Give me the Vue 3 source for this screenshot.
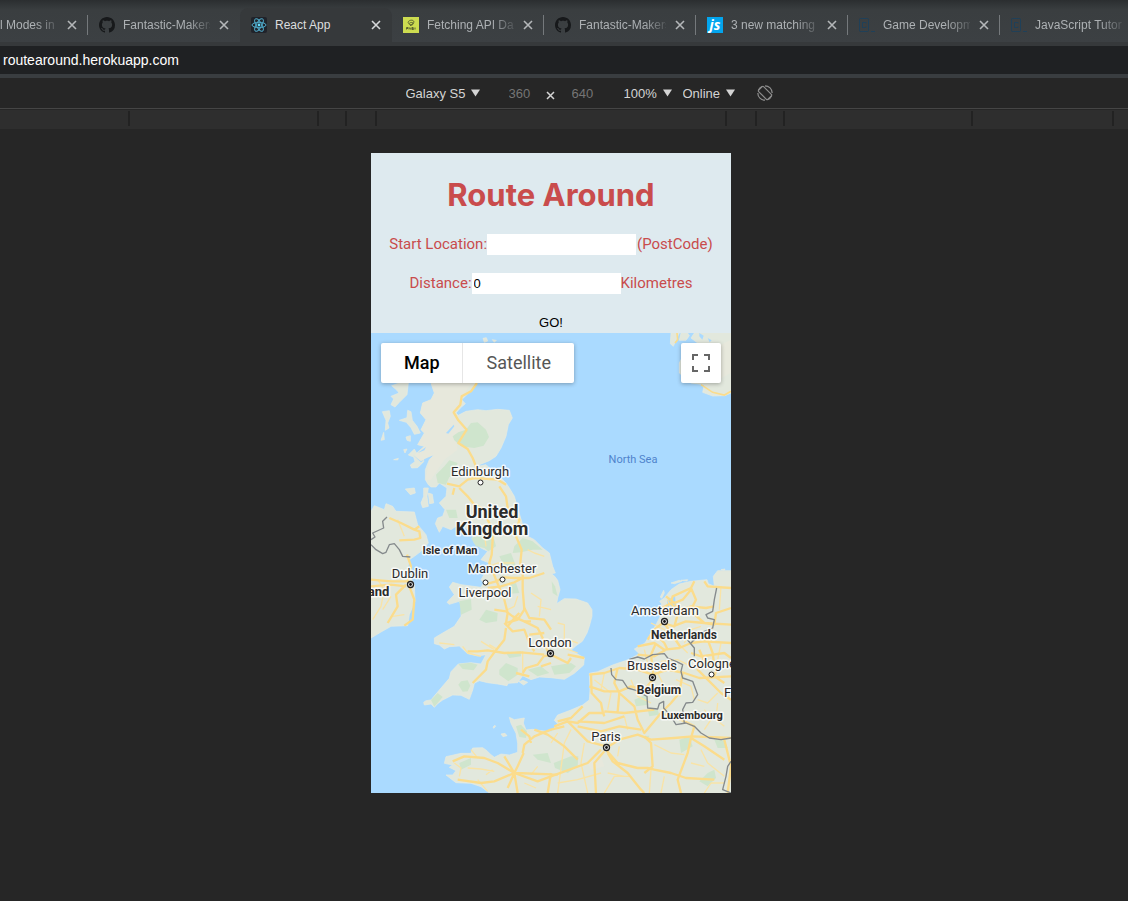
<script setup>
import { ref } from 'vue'

const tabs = [
  { title: 'l Modes in S', icon: '', first: true },
  { title: 'Fantastic-Makers', icon: 'github' },
  { title: 'React App', icon: 'react', active: true },
  { title: 'Fetching API Data', icon: 'note' },
  { title: 'Fantastic-Makers', icon: 'github' },
  { title: '3 new matching j', icon: 'js' },
  { title: 'Game Developme', icon: 'code' },
  { title: 'JavaScript Tutoria', icon: 'code', last: true }
]

const postcode = ref('')
const distance = ref('0')

const ticks = [128, 317, 345, 375, 725, 755, 783, 971, 1112]

const cities = [
  { name: 'Edinburgh', x: 109, y: 143, mx: 109, my: 149 },
  { name: 'Dublin', x: 39, y: 245, mx: 39, my: 251, capital: true },
  { name: 'Manchester', x: 131, y: 240, mx: 131, my: 246 },
  { name: 'Liverpool', x: 114, y: 264, mx: 114, my: 249 },
  { name: 'London', x: 179, y: 314, mx: 179, my: 320, capital: true },
  { name: 'Amsterdam', x: 294, y: 282, mx: 293, my: 288, capital: true },
  { name: 'Brussels', x: 281, y: 337, mx: 281, my: 344, capital: true },
  { name: 'Cologne', x: 341, y: 335, mx: 340, my: 341 },
  { name: 'Paris', x: 235, y: 408, mx: 235, my: 414, capital: true }
]

const regions = [
  { name: 'United', x: 121, y: 185, size: 'xl' },
  { name: 'Kingdom', x: 121, y: 202, size: 'xl' },
  { name: 'Isle of Man', x: 79, y: 221, size: 'sm' },
  { name: 'Ireland', x: -2, y: 263, size: 'lg' },
  { name: 'Netherlands', x: 313, y: 306, size: 'md' },
  { name: 'Belgium', x: 288, y: 361, size: 'md' },
  { name: 'Luxembourg', x: 321, y: 386, size: 'sm' }
]

const land = [
  // Great Britain
  'M180 150L200 60L300 70L318 150L295 178L272 200L283 212L268 225L255 240L262 247L285 235L320 230L345 233L380 229L415 232L424 255L412 275L405 310L390 345L375 370L355 383L325 395L312 402L345 395L358 408L330 430L385 430L405 450L415 465L430 490L440 525L455 575L470 610L490 620L515 645L535 660L545 700L553 720L541 722L551 730L560 742L567 770L560 795L557 812L580 797L615 798L650 810L663 830L663 850L655 880L648 900L634 925L615 938L600 952L640 975L638 996L610 1021L580 1039L540 1034L505 1032L480 1040L455 1028L440 1049L412 1051L408 1058L380 1053L350 1049L325 1043L310 1051L305 1071L295 1099L270 1087L245 1086L215 1101L200 1112L190 1123L180 1113L160 1116L158 1108L165 1103L180 1101L205 1071L235 1036L240 1016L262 993L300 989L330 993L345 965L320 969L290 962L265 939L235 941L220 948L205 936L190 932L190 915L215 900L250 880L270 850L272 820L265 805L235 814L228 808L250 785L235 762L245 748L270 755L330 763L338 750L330 740L345 715L355 690L330 680L350 655L330 645L310 630L302 600L285 585L255 580L240 590L215 580L205 598L193 572L200 555L215 550L222 530L205 510L225 490L228 465L205 450L195 462L180 462L172 455L163 440L163 410L175 380L190 365L170 370L145 385L132 365L160 340L140 335L160 300L150 290L165 260L148 240L155 210L180 200L190 180Z',
  // Ireland
  'M0 535L10 518L40 530L45 512L65 520L75 535L130 537L140 575L165 605L172 630L150 655L130 670L115 680L108 715L130 755L132 805L115 845L110 878L60 880L30 897L0 915Z',
  // Continent
  'M1080 713L1040 713L1027 730L1030 760L1012 752L1008 740L960 745L925 753L900 770L880 795L866 805L872 812L868 850L855 875L840 900L822 930L790 948L805 962L775 979L725 996L680 1016L655 1021L657 1071L655 1101L635 1116L600 1131L560 1146L550 1162L560 1172L540 1196L510 1193L485 1189L465 1191L457 1170L460 1155L430 1160L415 1153L420 1171L435 1201L440 1231L440 1258L415 1266L390 1263L370 1273L360 1265L345 1251L335 1244L305 1245L300 1261L270 1261L225 1271L220 1291L245 1296L235 1303L255 1313L245 1326L225 1326L255 1349L300 1351L330 1361L355 1380L1080 1380Z',
  // Norway
  'M970 0L960 15L980 30L940 60L925 90L925 120L960 150L1000 155L995 178L1025 189L1062 188L1080 180L1080 0Z',
  'M900 0L898 32L907 40L918 15L925 0ZM930 0L925 22L945 22L955 8L950 0Z',
  // Hebrides, Skye, Mull, Islay, Arran, Isle of Man, Orkney
  'M62 158L85 150L112 150L108 185L85 208L72 222L60 215L68 198L60 190L84 180L78 172Z',
  'M34 236L55 233L58 250L50 270L54 285L43 292L45 262ZM38 298L40 320L30 322Z',
  'M85 262L108 254L110 232L120 236L124 262L138 280L148 300L130 304L120 284L106 268Z',
  'M112 366L130 348L142 370L158 375L158 386L140 404L122 405L118 396L132 386L128 372ZM68 380L82 376L80 381Z',
  'M105 312L118 308L118 325L108 322ZM98 350L108 348L102 360Z',
  'M103 468L130 465L133 480L118 485ZM158 465L172 465L168 490L172 520L155 524L150 510L158 490ZM172 480L184 484L188 510L176 512Z',
  'M336 16L346 14L350 24L340 28ZM364 20L376 22L370 28Z',
  // Channel Islands, Wight, Frisian Islands
  'M366 1182L372 1177L374 1180L368 1186ZM390 1203L402 1201L408 1208L396 1211ZM444 1046L456 1042L470 1048L458 1056Z',
  'M868 792L878 772L880 780L872 796ZM900 750L925 742L932 745L910 752ZM930 742L950 740L948 744ZM1050 710L1062 708L1060 712Z'
]

const greens = [
  'M245 310L262 298L285 290L300 270L320 268L345 290L354 312L338 338L310 345L270 340L250 322Z',
  'M220 400L235 382L260 390L250 410L262 425L235 432L225 455L200 450L195 425Z',
  'M300 615L340 605L370 620L375 640L352 655L340 645L315 640Z',
  'M225 530L255 530L260 555L235 555Z',
  'M430 640L455 615L485 625L515 650L485 650L450 658L425 660Z',
  'M385 670L420 660L435 700L408 705L395 690Z',
  'M415 755L435 750L445 780L420 782Z',
  'M265 805L300 798L302 830L270 845Z',
  'M325 860L345 830L380 840L378 865L345 870Z',
  'M262 993L300 989L320 995L308 1012L275 1008Z',
  'M262 1055L270 1045L290 1042L298 1058L290 1075L275 1076Z',
  'M180 1101L200 1080L215 1092L190 1121Z',
  'M385 1010L405 990L440 1005L440 1025L412 1045L385 1025Z',
  'M405 960L450 955L450 970L415 975Z',
  'M470 1010L510 1000L535 1020L500 1030Z',
  'M540 1000L600 990L615 1000L595 1020L550 1025Z',
  'M542 745L552 760L560 790L545 780Z',
  'M435 1180L450 1175L468 1195L465 1215L445 1212Z',
  'M265 1290L300 1275L300 1295L270 1310Z',
  'M485 1265L530 1260L540 1290L500 1280Z',
  'M548 1290L600 1270L622 1270L620 1300L590 1320L552 1305Z',
  'M790 1100L825 1085L832 1115L795 1120Z',
  'M830 1130L860 1130L865 1145L835 1150Z',
  'M925 1220L955 1210L965 1240L930 1260Z',
  'M1030 1220L1060 1222L1070 1245L1040 1245Z',
  'M985 1345L1010 1320L1030 1310L1035 1335L1010 1360Z',
  'M810 1210L835 1208L828 1222Z'
]

const highlands = [
  'M180 150L300 150L270 200L250 240L280 290L255 320L260 350L220 380L180 440L163 440L175 380L190 365L145 385L132 365L160 340L140 335L160 300L150 290L165 260L148 240L155 210L180 200L190 180Z',
  'M1000 60L1080 20L1080 120L1040 140L1010 120Z',
  'M650 1290L690 1270L700 1300L660 1310Z'
]

const majorRoads = [
  'M318 150L300 175L272 190L268 215L248 238L262 262L287 290L262 330L290 348L305 375L315 400L310 432',
  'M228 452L265 460L290 440L312 435L380 440L405 455',
  'M250 465L245 485M265 465L290 490L310 515L340 530L350 560L362 585L365 620L362 665L355 690L375 740L388 770L400 800L410 840L405 870L440 860L460 830L455 770L455 720L448 690L452 650L435 610L440 580L445 560L410 525L405 490L385 460',
  'M340 755L375 745L400 733L430 735L475 735L520 720M350 765L390 760L430 748L455 735',
  'M370 830L405 835L425 850L460 865L480 865M410 880L435 850L445 840M400 870L425 895L460 890L475 930L490 955M405 885L400 920L370 958L350 985L345 1010L320 1035L305 1050M290 955L320 955L350 952L400 960L450 958L520 965',
  'M460 865L500 885L520 925L530 955M475 905L520 900M460 825L475 855L520 860L540 890',
  'M455 1020L465 1005L500 995L518 970L540 965L590 990L600 975M510 1000L540 990M435 1020L475 1030M590 965L640 975',
  'M0 740L60 745L110 745L120 700L108 665M115 760L130 800L125 860L100 878M0 760L60 755L105 760M105 755L75 785L80 820L50 870',
  'M55 555L90 570L130 590L145 595L148 615L130 620L85 622M130 590L145 580',
  'M865 830L900 810L905 790L960 765L970 745M885 790L910 810L935 800L960 770M900 810L920 845L910 880L875 870L850 890L830 920M910 815L935 830L960 820L1005 825L1030 820M920 845L960 835L1000 870L1080 875M960 765L975 800L965 820M1000 745L1010 760L1080 765M905 880L945 865L1000 870L1030 875L1035 840L1080 825',
  'M800 940L850 930L880 950L925 945L960 930L1000 925L1080 930M850 900L880 930L890 950M880 870L900 900L930 945M800 965L850 970L885 950M855 930L840 965L845 1010L850 1040',
  'M655 1025L700 1020L745 1005L800 1010L845 1025L890 1010L940 1020L985 1035L1080 1030M985 950L1000 985L980 1010L1010 1040L1050 1080L1080 1100M960 960L990 970L1060 960L1080 975M1000 985L1040 1000L1030 1030L1060 1050M1010 920L1025 960L1030 1000',
  'M660 1025L662 1080L690 1110L695 1135L700 1150M740 1005L730 1050L745 1080L740 1135M655 1060L700 1075L745 1075L780 1060L820 1070L850 1035M700 1135L760 1140L850 1130M745 1080L790 1120L800 1160L820 1200L870 1140L900 1110L925 1080L935 1020',
  'M550 1180L590 1165L620 1170L655 1140L700 1140M560 1165L600 1155L635 1120M590 1165L610 1185L650 1225L705 1240M620 1165L700 1170L760 1150M620 1180L690 1195L745 1180L810 1190',
  'M705 1245L745 1220L800 1205L840 1220L910 1215L965 1210L1080 1215M705 1250L740 1290L800 1305L830 1305L850 1310L900 1320L945 1335L1030 1340M700 1255L670 1290L675 1380M710 1260L725 1285L770 1320L810 1370L820 1380M690 1250L650 1290L540 1330L500 1345L430 1320',
  'M820 1210L840 1230L845 1300L820 1320M960 1215L950 1260L920 1340L930 1380M1060 1220L1080 1300L1070 1380M870 1140L930 1160L970 1180L960 1215L1000 1240L1060 1280',
  'M455 1260L460 1235L490 1210L540 1190L580 1180M450 1190L475 1210L480 1230M490 1190L530 1205L580 1240L620 1280M458 1260L440 1300L430 1320L370 1345L330 1350L260 1340M430 1320L380 1290L340 1275L280 1270L245 1285M435 1320L560 1325M430 1320L400 1270M430 1320L410 1365M430 1320L440 1380M540 1320L530 1380'
]

const minorRoads = [
  'M20 740L40 770L30 820L5 860M60 790L35 830M65 850L100 845M80 560L100 610',
  'M205 930L250 935M275 940L290 960L330 970M380 950L355 935M330 925L370 950',
  'M455 955L455 1015M410 830L430 820L440 790M480 780L510 800L505 850M470 650L490 660L520 670M500 820L540 830M560 870L580 875L580 920M590 920L620 930M540 930L620 960M345 640L340 600L370 590M355 700L380 690L430 690',
  'M250 1290L270 1305L265 1330M290 1305L330 1308L370 1315M345 1325L365 1310M320 1340L350 1375M480 1325L500 1300M460 1350L495 1365M300 1250L320 1275M540 1230L560 1200M600 1190L580 1230L560 1380M640 1230L630 1290L650 1380',
  'M840 870L880 890L920 930L950 960M940 930L960 890L990 880M900 830L890 800M1045 830L1050 760M830 990L820 950M870 985L920 980L960 1000M860 1020L880 1060L930 1090M915 1040L960 1060L970 1100M980 1100L1010 1110L1040 1080M1000 1130L1020 1160L1000 1190M1040 1110L1035 1160L1060 1180M1050 930L1040 980',
  'M670 1040L720 1080L710 1130M700 1020L690 1070M780 1040L800 1090L840 1110M760 1150L770 1190M740 1270L745 1240M710 1320L760 1330M850 1235L900 1260L940 1265M880 1330L870 1380M780 1330L730 1330L700 1380M990 1250L1010 1290L1060 1330M960 1290L1000 1300M560 1350L620 1340L690 1320M840 1310L835 1380M1000 1380L1020 1350L1060 1350'
]

const borders = [
  'M48 552L35 565L38 585L5 600L12 612L0 620M0 635L15 650L35 662L45 658L55 635L70 632L85 650L95 670L118 672',
  'M720 1005L722 1025L735 1040L755 1042L770 1065L795 1072L828 1090L830 1125L860 1128L865 1112L878 1105L878 1125L900 1150L915 1175L945 1170L970 1180L990 1200L1015 1215L1050 1220L1080 1215',
  'M775 979L800 972L820 978L845 965L880 962L890 975L915 985L935 995L930 1015L935 1035L965 1045L980 1085L965 1108L945 1110L935 1130L940 1170',
  'M1037 765L1030 800L1025 835L1005 845L1010 855L1030 860L1025 885L1000 895L975 915L960 930',
  'M950 921L970 945L970 970M1080 1285L1070 1300L1065 1330L1055 1370L1080 1380'
]
</script>

<template>
  <div class="browser">
    <nav class="tab-strip" aria-label="Open tabs">
      <div
        v-for="(tab, i) in tabs"
        :key="i"
        class="tab"
        :class="{ active: tab.active, first: tab.first, last: tab.last, beforeActive: i === 1 }"
      >
        <svg v-if="tab.icon === 'github'" class="favicon" viewBox="0 0 16 16" aria-hidden="true">
          <path fill="#17191b" d="M8 0C3.58 0 0 3.58 0 8c0 3.54 2.29 6.53 5.47 7.59.4.07.55-.17.55-.38 0-.19-.01-.82-.01-1.49-2.01.37-2.53-.49-2.69-.94-.09-.23-.48-.94-.82-1.13-.28-.15-.68-.52-.01-.53.63-.01 1.08.58 1.23.82.72 1.21 1.87.87 2.33.66.07-.52.28-.87.51-1.07-1.78-.2-3.64-.89-3.64-3.95 0-.87.31-1.59.82-2.15-.08-.2-.36-1.02.08-2.12 0 0 .67-.21 2.2.82.64-.18 1.32-.27 2-.27s1.36.09 2 .27c1.53-1.04 2.2-.82 2.2-.82.44 1.1.16 1.92.08 2.12.51.56.82 1.27.82 2.15 0 3.07-1.87 3.75-3.65 3.95.29.25.54.73.54 1.48 0 1.07-.01 1.93-.01 2.2 0 .21.15.46.55.38A8.01 8.01 0 0 0 16 8c0-4.42-3.58-8-8-8z" />
        </svg>
        <svg v-else-if="tab.icon === 'react'" class="favicon" viewBox="0 0 16 16" aria-hidden="true">
          <rect width="16" height="16" rx="2" fill="#20232a" />
          <g fill="none" stroke="#4fa9c8" stroke-width="1">
            <ellipse cx="8" cy="8" rx="7" ry="2.7" />
            <ellipse cx="8" cy="8" rx="7" ry="2.7" transform="rotate(60 8 8)" />
            <ellipse cx="8" cy="8" rx="7" ry="2.7" transform="rotate(120 8 8)" />
          </g>
          <circle cx="8" cy="8" r="1.4" fill="#61dafb" />
        </svg>
        <svg v-else-if="tab.icon === 'note'" class="favicon" viewBox="0 0 16 16" aria-hidden="true">
          <rect width="16" height="16" fill="#cddc50" />
          <g fill="none" stroke="#5c6530" stroke-width="1">
            <path d="M5.5 6.5C4 4 8 2.500 10 3.500C12.500 5 9 8.500 6.500 7.500C5 6.500 8 4.500 10 6C11 7 9 8.500 7 8.500" />
            <path d="M3.500 12.500V10.500H5M3.500 11.500H5M6 12.500V10.500L8 12.500V10.500M10.500 10.500H9V11.500H10.500V12.500H9M12 10.500V12.500" />
          </g>
        </svg>
        <span v-else-if="tab.icon === 'js'" class="favicon js-icon" aria-hidden="true">js</span>
        <svg v-else-if="tab.icon === 'code'" class="favicon" viewBox="0 0 16 16" aria-hidden="true">
          <g fill="none" stroke="#1f4059" stroke-width="1">
            <rect x="0.500" y="1.500" width="9" height="13" rx="1" />
            <path d="M7 6.500V5.500H3.500V10.500H7V9.500M12 14.500H16" />
          </g>
        </svg>
        <a class="tab-title" href="#">{{ tab.title }}</a>
        <button v-if="!tab.last" class="tab-close" type="button" aria-label="Close tab">
          <svg viewBox="0 0 10 10" width="10" height="10"><path d="M1 1L9 9M9 1L1 9" stroke="currentColor" stroke-width="1.600" fill="none" /></svg>
        </button>
      </div>
    </nav>

    <div class="address-bar">
      <input class="address" type="text" value="routearound.herokuapp.com" aria-label="Address" />
    </div>

    <div class="device-bar">
      <label class="picker device">
        <select aria-label="Device"><option>Galaxy S5</option></select>
        <svg viewBox="0 0 9 8" width="9" height="8"><path d="M0 0.500H9L4.500 7.500Z" fill="currentColor" /></svg>
      </label>
      <input class="dimension" type="text" value="360" aria-label="Width" />
      <span class="times"><svg viewBox="0 0 9 9" width="9" height="9"><path d="M1 1L8 8M8 1L1 8" stroke="currentColor" stroke-width="1.500" /></svg></span>
      <input class="dimension" type="text" value="640" aria-label="Height" />
      <label class="picker zoom">
        <select aria-label="Zoom"><option>100%</option></select>
        <svg viewBox="0 0 9 8" width="9" height="8"><path d="M0 0.500H9L4.500 7.500Z" fill="currentColor" /></svg>
      </label>
      <label class="picker network">
        <select aria-label="Network"><option>Online</option></select>
        <svg viewBox="0 0 9 8" width="9" height="8"><path d="M0 0.500H9L4.500 7.500Z" fill="currentColor" /></svg>
      </label>
      <button class="rotate" type="button" aria-label="Rotate">
        <svg viewBox="0 0 16 16" width="16" height="16" fill="none" stroke="#8d8d8d" stroke-width="1.200">
          <rect x="4.500" y="1.500" width="7" height="13" rx="1" transform="rotate(-45 8 8)" />
          <path d="M8 0.800A7.200 7.200 0 0 1 15.200 8M8 15.200A7.200 7.200 0 0 1 0.800 8M1.500 5A7 7 0 0 1 5 1.500M14.500 11A7 7 0 0 1 11 14.500" />
        </svg>
      </button>
    </div>

    <div class="ruler">
      <svg width="100%" height="19" aria-hidden="true">
        <rect v-for="t in ticks" :key="t" :x="t" y="1" width="2" height="15" fill="#222" />
      </svg>
    </div>

    <main class="stage">
      <div class="device-screen">
        <form class="planner" @submit.prevent>
          <h1>Route Around</h1>
          <div class="field">
            <label for="start">Start Location:</label>
            <input id="start" v-model="postcode" type="text" />
            <span class="unit spaced">(PostCode)</span>
          </div>
          <div class="field">
            <label for="distance">Distance:</label>
            <input id="distance" v-model="distance" type="text" />
            <span class="unit">Kilometres</span>
          </div>
          <button class="go" type="submit">GO!</button>
        </form>

        <section class="map" aria-label="Map">
          <svg class="terrain" viewBox="0 0 1080 1380" preserveAspectRatio="xMinYMin slice" aria-hidden="true">
            <rect width="1080" height="1380" fill="#aadaff" />
            <path v-for="(d, i) in land" :key="'l' + i" :d="d" fill="#e2e8dd" stroke="#e9ecdf" stroke-width="2" stroke-linejoin="round" />
            <path v-for="(d, i) in highlands" :key="'h' + i" :d="d" fill="#e7e8dc" />
            <path v-for="(d, i) in greens" :key="'g' + i" :d="d" fill="#cfe5cd" />
            <path d="M888 802L912 790L916 835L900 850L908 838L890 825ZM225 300L248 275L250 280L232 302ZM140 360L165 342L160 352ZM125 365L150 385L160 380L150 388ZM985 0L998 8L994 20L985 10ZM1010 15L1022 22L1016 28Z" fill="#aadaff" />
            <g fill="none" stroke="#f9e3a6" stroke-width="4" stroke-linejoin="round">
              <path v-for="(d, i) in minorRoads" :key="'m' + i" :d="d" />
            </g>
            <g fill="none" stroke="#fbdc8c" stroke-width="7" stroke-linejoin="round">
              <path v-for="(d, i) in majorRoads" :key="'r' + i" :d="d" />
            </g>
            <path d="M918 0L920 20L912 30M990 155L1025 178L1060 186L1080 175" fill="none" stroke="#fbdc8c" stroke-width="5" />
            <g fill="none" stroke="#858a8c" stroke-width="4" stroke-linejoin="round">
              <path v-for="(d, i) in borders" :key="'b' + i" :d="d" />
            </g>
          </svg>
          <svg class="labels" viewBox="0 0 360 460" preserveAspectRatio="xMinYMin slice">
            <g v-for="c in cities" :key="c.name" >
              <g transform="translate(0.5 0.5)">
                <circle :cx="c.mx" :cy="c.my" :r="c.capital ? 3 : 2.5" fill="#fff" stroke="#222" :stroke-width="c.capital ? 1.3 : 1" />
                <circle v-if="c.capital" :cx="c.mx" :cy="c.my" r="1.4" fill="#111" />
              </g>
              <text :x="c.x" :y="c.y" class="city">{{ c.name }}</text>
            </g>
            <text x="353" y="364" class="city start">Frankfurt</text>
            <text v-for="r in regions" :key="r.name" :x="r.x" :y="r.y" class="region" :class="r.size">{{ r.name }}</text>
            <text x="262" y="130" class="sea">North Sea</text>
          </svg>

          <div class="map-controls">
            <div class="map-type">
              <button type="button" class="selected">Map</button>
              <button type="button" class="other">Satellite</button>
            </div>
            <button type="button" class="fullscreen" aria-label="Toggle fullscreen view">
              <svg viewBox="0 0 18 18" width="18" height="18"><path d="M0 0H6V2H2V6H0ZM12 0H18V6H16V2H12ZM0 12H2V16H6V18H0ZM16 12H18V18H12V16H16Z" fill="#666" /></svg>
            </button>
          </div>
        </section>
      </div>
    </main>
  </div>
</template>

<style>
html,
body {
  background: #262626;
}
</style>

<style scoped>
.browser {
  min-height: 100vh;
  display: flex;
  flex-direction: column;
  background: #262626;
  font-family: "Liberation Sans", Arial, sans-serif;
  overflow: hidden;
}

button,
input,
select {
  margin: 0;
  padding: 0;
  border: 0;
  background: none;
  font: inherit;
  color: inherit;
  border-radius: 0;
}

svg {
  display: block;
}

.tab-strip {
  display: flex;
  height: 46px;
  box-sizing: border-box;
  padding-top: 8px;
  background: linear-gradient(#2b2e30 0, #3a3e40 10px, #3c4043 42px, #36393b 42px);
  overflow: hidden;
}

.tab {
  position: relative;
  display: flex;
  flex: 0 0 152px;
  align-items: center;
  box-sizing: border-box;
  height: 34px;
  padding-left: 11px;
  font-size: 12px;
  color: #adb1b4;
}

.tab::after {
  content: '';
  position: absolute;
  right: 0;
  top: 7px;
  width: 1px;
  height: 20px;
  background: #75797c;
}

.tab.active::after,
.tab.beforeActive::after,
.tab.last::after {
  display: none;
}

.tab.first {
  flex-basis: 88px;
  padding-left: 0;
}

.tab.active {
  height: 38px;
  padding-bottom: 4px;
  border-radius: 8px 8px 0 0;
  background: #36393b;
  color: #dcdedf;
}

.favicon {
  flex: none;
  width: 16px;
  height: 16px;
  margin-right: 8px;
}

.js-icon {
  background: #03a5ee;
  color: #fff;
  font: italic 700 14px/16px "Open Sans", sans-serif;
  text-align: center;
}

.tab-title {
  flex: none;
  width: 87px;
  line-height: 16px;
  color: inherit;
  text-decoration: none;
  white-space: nowrap;
  overflow: hidden;
  mask-image: linear-gradient(90deg, #000 64px, transparent 92px);
}

.tab.first .tab-title {
  width: 58px;
  mask-image: linear-gradient(90deg, #000 36px, transparent 62px);
}

.tab.active .tab-title {
  mask-image: none;
}

.tab-close {
  width: 10px;
  height: 10px;
  margin-left: 9px;
  color: #b4b7b9;
}

.tab.active .tab-close {
  color: #d6d8da;
}

.address-bar {
  height: 28px;
  background: #1f2123;
  border-bottom: 4px solid #393d40;
}

.address {
  display: block;
  width: 100%;
  height: 28px;
  padding-left: 3px;
  box-sizing: border-box;
  color: #fff;
  font-size: 14px;
}

.device-bar {
  display: flex;
  align-items: center;
  justify-content: center;
  height: 30px;
  padding-left: 50px;
  border-bottom: 1px solid #454545;
  color: #d4d4d4;
  font-size: 13px;
}

.picker {
  display: flex;
  align-items: center;
  gap: 5px;
}

.picker select {
  appearance: none;
}

.device {
  margin-right: 29px;
}

.dimension {
  width: 24px;
  color: #757575;
}

.times {
  margin: 4px 17px 0 13px;
}

.zoom {
  margin: 0 11px 0 28px;
}

.rotate {
  margin-left: 22px;
}

.ruler {
  margin-top: 1px;
  height: 19px;
  background: #2e2e2e;
}

.stage {
  flex: 1;
  display: flex;
  justify-content: center;
  align-items: flex-start;
  padding: 24px 26px 24px 0;
}

.device-screen {
  width: 360px;
  max-width: 100%;
  background: #deeaef;
}

.planner {
  display: flex;
  flex-direction: column;
  align-items: center;
  padding-top: 23px;
}

h1 {
  margin: 0 0 21px;
  font-family: Inter, sans-serif;
  font-size: 31px;
  line-height: 37px;
  font-weight: 700;
  color: #c94c4c;
}

.field {
  display: flex;
  justify-content: center;
  align-items: center;
  height: 21px;
  margin-bottom: 18px;
  font-family: Roboto, sans-serif;
  font-size: 15px;
  line-height: 18px;
  color: #c94c4c;
}

.field label,
.unit {
  padding-bottom: 1px;
}

.field input {
  width: 149px;
  height: 21px;
  box-sizing: border-box;
  padding: 0 2px;
  background: #fff;
  color: #000;
  font: 13px "Liberation Sans", Arial, sans-serif;
}

.spaced {
  margin-left: 1px;
}

.go {
  height: 21px;
  color: #000;
  font-size: 13px;
  line-height: 21px;
}

.map {
  position: relative;
  aspect-ratio: 360 / 460;
  overflow: hidden;
  background: #aadaff;
  font-family: Roboto, sans-serif;
}

.terrain,
.labels {
  position: absolute;
  inset: 0;
  width: 100%;
  height: 100%;
}

.labels text {
  text-anchor: middle;
  paint-order: stroke;
  stroke: #fff;
  stroke-width: 3px;
  stroke-linejoin: round;
  stroke-opacity: 0.8;
  fill: #2b2b2b;
}

.labels .city {
  font-size: 13px;
}

.labels .start {
  text-anchor: start;
}

.labels .region {
  font-weight: 700;
}

.labels .xl {
  font-size: 18px;
}

.labels .lg {
  font-size: 13px;
}

.labels .md {
  font-size: 12px;
}

.labels .sm {
  font-size: 11px;
}

.labels .sea {
  font-size: 11px;
  fill: #4f83cc;
  stroke: none;
}

.map-controls {
  position: relative;
  display: flex;
  justify-content: space-between;
  padding: 10px;
}

.map-type {
  display: flex;
  height: 40px;
  border-radius: 2px;
  background: #fff;
  box-shadow: 0 1px 4px rgba(0, 0, 0, 0.3);
}

.map-type button {
  padding: 0 23px 2px;
  font-size: 18px;
  color: #565656;
}

.map-type .selected {
  padding-right: 22px;
  border-right: 1px solid #e6e6e6;
  font-weight: 500;
  color: #000;
}

.map-type .other {
  padding-left: 24px;
}

.fullscreen {
  display: flex;
  align-items: center;
  justify-content: center;
  width: 40px;
  height: 40px;
  border-radius: 2px;
  background: #fff;
  box-shadow: 0 1px 4px rgba(0, 0, 0, 0.3);
}
</style>
